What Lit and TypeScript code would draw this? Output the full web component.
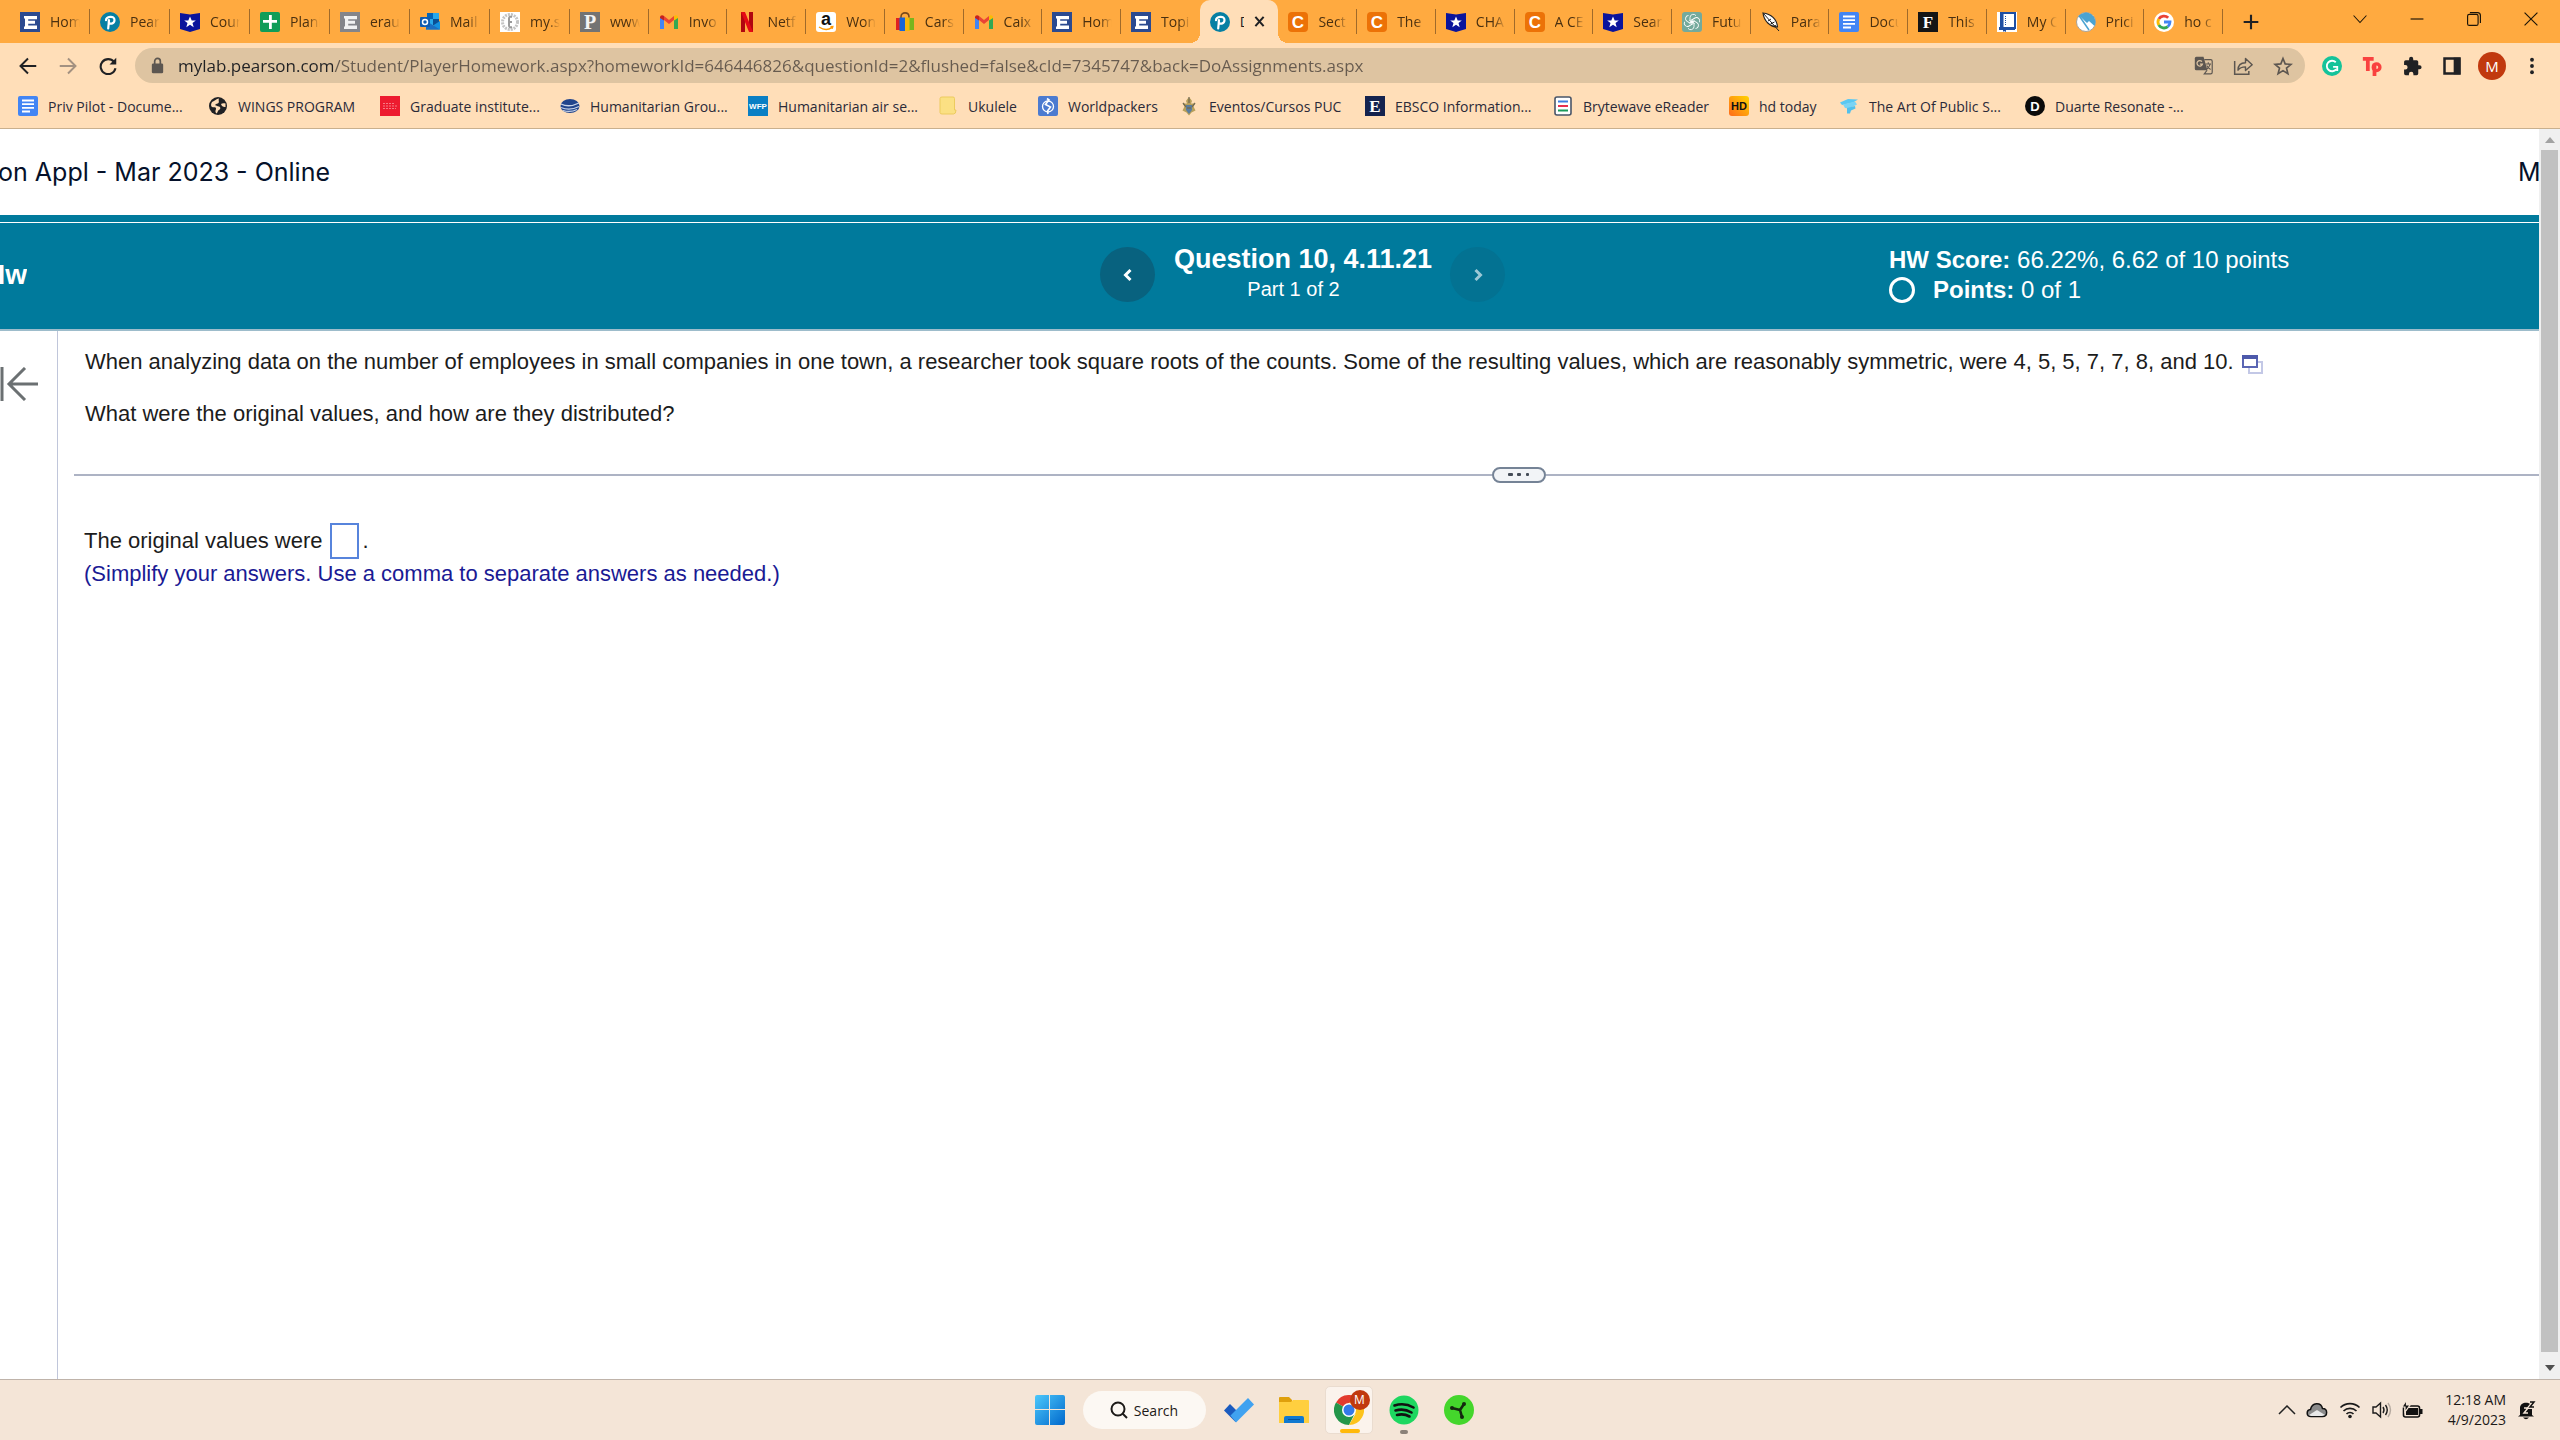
import { LitElement, html, css, svg, TemplateResult } from "lit";
import { customElement, property } from "lit/decorators.js";

const letter = (bg: string, fg: string, ch: string, radius = 0, size = 16, family = "Liberation Sans") => svg`
  <rect width="20" height="20" rx="${radius}" fill="${bg}"/>
  <text x="10" y="${10 + Math.round(size * 0.36)}" text-anchor="middle" font-family="${family}" font-weight="700" font-size="${size}" fill="${fg}">${ch}</text>`;

const blockE = (bg: string, fg: string) => svg`
  <rect width="20" height="20" fill="${bg}"/>
  <path d="M4 4h13v3.2H8.2v1.6H15v3H8.2v1.600H17V17H4v-2.600h1V6.600H4z" fill="${fg}"/>`;

const shield = svg`
  <path d="M0 1l10 1.500L20 1v16l-10 3L0 17z" fill="#0a149c"/>
  <path d="M10 4.500l1.700 4h4.100l-3.300 2.600 1.200 4.200-3.700-2.500-3.700 2.500 1.200-4.200-3.300-2.600h4.100z" fill="#fff"/>`;

const gmail = svg`
  <path d="M1 17V5l4 3v9z" fill="#4285f4"/>
  <path d="M15 17V8l4-3v12z" fill="#34a853"/>
  <path d="M5 8V4l5 4 5-4v4l-5 4z" fill="#ea4335"/>
  <path d="M1 5.500C1 3 3.500 2.500 5 4v4.500L1 6z" fill="#c5221f"/>
  <path d="M19 5.500C19 3 16.500 2.500 15 4v4.500L19 6z" fill="#fbbc04"/>`;

const docs = svg`
  <rect width="20" height="20" rx="2" fill="#4285f4"/>
  <path d="M4 4.500h12M4 8.200h12M4 11.900h12M4 15.500h8" stroke="#fff" stroke-width="1.800"/>`;

const icons: Record<string, unknown> = {
  erau: blockE("#2b4a90", "#fff"),
  erauGrey: blockE("#84858a", "#f2f2f2"),
  pearson: svg`<circle cx="10" cy="10" r="10" fill="#067fa3"/>
    <path d="M8.200 16.500l.8-8M6 8.200C6 4.500 14.500 3 14.500 8c0 3.600-4 4.500-5.500 2.800M8.900 8.200l-.2 2.600" fill="none" stroke="#fff" stroke-width="2.200" stroke-linecap="round"/>`,
  shield,
  sheets: svg`<rect width="20" height="20" rx="2" fill="#0f9d58"/><path d="M9 3h2.800v5H17v2.800h-5.200V17H9v-6.200H3V8h6z" fill="#fff"/>`,
  outlook: svg`<path d="M7 1h12v12H7z" fill="#28a8ea"/><path d="M7 1h6v6H7z" fill="#0364b8"/><path d="M13 7h6v6h-6z" fill="#0a4f94"/>
    <path d="M6 9l7 4.500L20 9v8.500H6z" fill="#1490df"/><path d="M6 9l14 8.500H6z" fill="#1b6ec2"/>
    <rect y="5" width="10" height="10" rx="1" fill="#0f5cb0"/><circle cx="5" cy="10" r="2.500" fill="none" stroke="#fff" stroke-width="1.500"/>`,
  mys: svg`<rect width="20" height="20" fill="#fff"/><circle cx="10" cy="10" r="7.500" fill="none" stroke="#c4c4c4" stroke-width="3" stroke-dasharray="2 1"/><path d="M12 5q-3-1-3 1.500v7q0 2.500 3 1.500M9 10h3" fill="none" stroke="#9a9a9a" stroke-width="2"/>`,
  parch: letter("#737373", "#f4f4f4", "P", 0, 20, "Liberation Serif"),
  gmail,
  netflix: svg`<path d="M4 0h4v20H4zM12 0h4v20h-4z" fill="#b1060f"/><path d="M4 0h4l8 20h-4z" fill="#e50914"/>`,
  amazon: svg`<rect width="20" height="20" rx="3" fill="#fff"/>
    <text x="10" y="13" text-anchor="middle" font-family="Liberation Sans" font-weight="700" font-size="18" fill="#111">a</text>
    <path d="M3 15c4.500 3 9.500 3 13 .4M14.500 14.700l2.300-.2-.6 2.200" fill="none" stroke="#f90" stroke-width="1.400"/>`,
  bag: svg`<path d="M6 7V5c0-5.500 8-5.500 8 0v2" fill="none" stroke="#7b4b1c" stroke-width="1.600"/>
    <path d="M1 6h4v12H1z" fill="#e02020"/><path d="M4.500 5.500H10V19H4.500z" fill="#1764d8"/><path d="M10 5.500h5V19h-5z" fill="#f6b60b"/><path d="M14.500 6H19v12h-4.500z" fill="#7ab51d"/>`,
  chegg: letter("#ec7207", "#fff", "C", 4, 17),
  openai: svg`<rect width="20" height="20" rx="3" fill="#74aa9c"/><g fill="none" stroke="#fff" stroke-width=".9"><g id="k"><path d="M8 9V5.500a3.300 3.300 0 0 1 6-1.800M8 9l4.500 2.500"/></g><path d="M8 9V5.500a3.300 3.300 0 0 1 6-1.800M8 9l4.500 2.500" transform="rotate(60 10 10)"/><path d="M8 9V5.500a3.300 3.300 0 0 1 6-1.800M8 9l4.500 2.500" transform="rotate(120 10 10)"/><path d="M8 9V5.500a3.300 3.300 0 0 1 6-1.800M8 9l4.500 2.500" transform="rotate(180 10 10)"/><path d="M8 9V5.500a3.300 3.300 0 0 1 6-1.800M8 9l4.500 2.500" transform="rotate(240 10 10)"/><path d="M8 9V5.500a3.300 3.300 0 0 1 6-1.800M8 9l4.500 2.500" transform="rotate(300 10 10)"/></g>`,
  quill: svg`<path d="M2 1c8 1 14 6 14.500 14C9 15 3 9 2 1z" fill="#fff" stroke="#222" stroke-width="1.200"/><path d="M2.500 1.500L18 19M7 9l3-2M9.500 12l4-2M12 14.500l3-1" stroke="#222" stroke-width="1" fill="none"/>`,
  docs,
  fblack: letter("#151515", "#fff", "F", 0, 17, "Liberation Serif"),
  book: svg`<rect width="20" height="20" fill="#fff"/><path d="M4 1h14v15H4z" fill="none" stroke="#1f4fa3" stroke-width="2"/><path d="M3 1h3.500v15H3zM2 15h16v3H9v2l-2-1-1 1v-2H2z" fill="#1f4fa3"/><path d="M8.500 4v9" stroke="#1f4fa3" stroke-dasharray="1 1"/>`,
  pricing: svg`<circle cx="10" cy="10" r="9.500" fill="#fff" stroke="#a7a39a"/><path d="M3 3.500A9.500 9.500 0 0 1 18.500 14L13 9l-2 2z" fill="#4ba3d1"/><path d="M3 3.500L13 18" stroke="#4ba3d1" stroke-width="1.500"/>`,
  google: svg`<circle cx="10" cy="10" r="10" fill="#fff"/><g fill="none" stroke-width="2.800"><path d="M14.200 5.800A6 6 0 0 0 4.800 7" stroke="#ea4335"/><path d="M4.800 7a6 6 0 0 0 0 6" stroke="#fbbc05"/><path d="M4.800 13a6 6 0 0 0 9 1.600" stroke="#34a853"/><path d="M13.800 14.600A6 6 0 0 0 16 10h-6" stroke="#4285f4"/></g>`,
  globe: svg`<circle cx="10" cy="10" r="9" fill="#202124"/><path d="M11 2.500c-3 .5-4 2-7 3.500-1.500 2.500-1 4 0 5 2 .5 4-.5 4 1.500s-1.500 2.500.5 5c1.500-1 1-3 2.500-3.500 2-1 1.500-3 0-3.500-2-.5-2.500-1-4-1.500 1-1.500 2.500-1 3.500-2 1-1.500-.5-3 .5-4.500zM13 8c1-1 3-1 4.500-.5V11c-2 .5-4-1-4.500-3z" fill="#ffdeb8"/>`,
  graduate: svg`<rect width="20" height="20" fill="#ed1b2f"/><path d="M3 7.500h12M3 10h14M3 12.500h13" stroke="#f67a85" stroke-width="1" stroke-dasharray="2 1"/>`,
  humanitarian: svg`<ellipse cx="10" cy="10" rx="9.500" ry="7" fill="#22458c"/><path d="M1 8c5 2.500 12 2 18-1M1 11.500c6 2.500 12 2 18-1M3 14.500c5 1.500 10 1 14-1" stroke="#c9d4e8" stroke-width="1.300" fill="none"/>`,
  wfp: letter("#0a7fc4", "#fff", "WFP", 0, 8),
  note: svg`<path d="M4 1h11q1.500 0 1.500 1.500V14H18q0 4-2.500 4H4q-2 0-2-1.500V2.500Q2 1 4 1z" fill="#fbe083" stroke="#eccb5e"/>`,
  worldpackers: svg`<rect width="20" height="20" rx="2" fill="#4c7bd0"/><circle cx="10" cy="10.500" r="5.500" fill="none" stroke="#fff" stroke-width="1.300"/><path d="M9 2.500l2 1.500-3.500 4.500 5 2.500-3 4 .5 3" fill="none" stroke="#fff" stroke-width="1.600"/>`,
  puc: svg`<path d="M7 5q3-6 6 0l-1 2.500h4l-1.500 3 2 4-4 2-2.500 3-2.500-3-4-2 2-4-1.500-3h4z" fill="#b79f5a"/><path d="M7 9h6v5l-3 4-3-4z" fill="#5a7d9e"/><path d="M4 7l3 4M16 7l-3 4M10 1v6M8 12h4" stroke="#746b52" stroke-width="1.300"/>`,
  ebsco: letter("#14234f", "#fff", "E", 0, 17, "Liberation Serif"),
  bryte: svg`<rect x="2" y="1" width="16" height="18" rx="2" fill="#fff" stroke="#4a5568" stroke-width="1.600"/><path d="M5 5.500h10" stroke="#3d7fe0" stroke-width="2"/><path d="M5 10h10" stroke="#e8304f" stroke-width="2"/><path d="M5 14.500h10" stroke="#1b9a5a" stroke-width="2"/>`,
  hd: svg`<defs><linearGradient id="hd" x1="0" y1="1" x2="1" y2="0"><stop offset="0" stop-color="#ff6a1a"/><stop offset="1" stop-color="#ffd400"/></linearGradient></defs><rect width="20" height="20" rx="3" fill="url(#hd)"/><text x="10" y="14" text-anchor="middle" font-family="Liberation Sans" font-weight="700" font-size="11" fill="#111">HD</text>`,
  art: svg`<path d="M1 6.500L9 3l10 .5-5 3L3 9z" fill="#5bc8f2"/><path d="M4 8.500l12-3 2 3-8 4-4-.5z" fill="#7ad4f5"/><path d="M8 12l8-2 .5 2.500-4.500 2-1 3H8z" fill="#52c0ec"/>`,
  duarte: svg`<circle cx="10" cy="10" r="10" fill="#0b0b0b"/><text x="10" y="15" text-anchor="middle" font-family="Liberation Sans" font-weight="700" font-size="13" fill="#fff">D</text>`,
};

@customElement("site-icon")
class SiteIcon extends LitElement {
  @property() name = "";
  static styles = css`
    :host { display: block; flex: none; width: 20px; height: 20px; }
    svg { display: block; width: 20px; height: 20px; }
  `;
  render() {
    return html`<svg viewBox="0 0 20 20" aria-hidden="true">${icons[this.name]}</svg>`;
  }
}

interface Tab { icon: string; label: string; active?: boolean }
const tabs: Tab[] = [
  { icon: "erau", label: "Hom" }, { icon: "pearson", label: "Pears" }, { icon: "shield", label: "Cour" },
  { icon: "sheets", label: "Plani" }, { icon: "erauGrey", label: "erau" }, { icon: "outlook", label: "Mail" },
  { icon: "mys", label: "my.s" }, { icon: "parch", label: "www" }, { icon: "gmail", label: "Invo" },
  { icon: "netflix", label: "Netf" }, { icon: "amazon", label: "Won" }, { icon: "bag", label: "Cars" },
  { icon: "gmail", label: "Caix" }, { icon: "erau", label: "Hom" }, { icon: "erau", label: "Topi" },
  { icon: "pearson", label: "D", active: true }, { icon: "chegg", label: "Sect" }, { icon: "chegg", label: "The" },
  { icon: "shield", label: "CHA" }, { icon: "chegg", label: "A CE" }, { icon: "shield", label: "Sear" },
  { icon: "openai", label: "Futu" }, { icon: "quill", label: "Para" }, { icon: "docs", label: "Docu" },
  { icon: "fblack", label: "This" }, { icon: "book", label: "My C" }, { icon: "pricing", label: "Prici" },
  { icon: "google", label: "ho c" },
];

const bookmarks: [string, string][] = [
  ["docs", "Priv Pilot - Docume..."], ["globe", "WINGS PROGRAM"], ["graduate", "Graduate institute..."],
  ["humanitarian", "Humanitarian Grou..."], ["wfp", "Humanitarian air se..."], ["note", "Ukulele"],
  ["worldpackers", "Worldpackers"], ["puc", "Eventos/Cursos PUC"], ["ebsco", "EBSCO Information..."],
  ["bryte", "Brytewave eReader"], ["hd", "hd today"], ["art", "The Art Of Public S..."], ["duarte", "Duarte Resonate -..."],
];

const icon = (size: number, body: unknown) =>
  html`<svg class="glyph" width="${size}" height="${size}" viewBox="0 0 24 24" fill="none" stroke="currentColor" stroke-width="2" aria-hidden="true">${body}</svg>`;

@customElement("browser-chrome")
class BrowserChrome extends LitElement {
  static styles = css`
    :host { display: block; font-family: "Open Sans", "Noto Sans", sans-serif; font-size: 14px; color: #2b2320; background: #ffdeb8; border-bottom: 1px solid #c9b08e; }
    * { box-sizing: border-box; }
    button { font: inherit; color: inherit; background: none; border: 0; padding: 0; margin: 0; display: flex; align-items: center; justify-content: center; }
    .glyph { display: block; flex: none; }
    .strip { display: flex; height: 43px; background: #ffaa40; padding-left: 10px; }
    .tabs { flex: 0 1 2213px; display: grid; grid-template-columns: repeat(7, 80px) repeat(21, minmax(0, 1fr)); }
    .tab { position: relative; justify-content: flex-start; padding-left: 10px; gap: 10px; color: #4a3010; min-width: 0; }
    .tab::after { content: ""; position: absolute; right: 0; top: 9px; width: 1px; height: 25px; background: #a06a2a; }
    .tab.quiet::after { display: none; }
    .label { width: 30px; overflow: hidden; white-space: nowrap; text-align: left; mask-image: linear-gradient(to right, #000 60%, transparent); }
    .tab.active { background: #ffdeb8; border-radius: 10px 10px 0 0; }
    .tab.active .label { width: 4px; mask-image: none; }
    .tab.active::before { content: ""; position: absolute; z-index: 1; left: -10px; right: -10px; bottom: 0; height: 10px; pointer-events: none;
      background: radial-gradient(circle at 0 0, transparent 10px, #ffdeb8 10px) left / 10px 10px no-repeat, radial-gradient(circle at 10px 0, transparent 10px, #ffdeb8 10px) right / 10px 10px no-repeat; }
    .tab.active { color: #202124; }
    .new { width: 56px; color: #202124; }
    .controls { margin-left: auto; display: flex; height: 38px; padding-right: 1px; color: #1c1508; }
    .controls button { width: 57px; }
    .bar { display: flex; align-items: center; height: 45px; padding: 0 8px; color: #202124; }
    .bar button { width: 40px; height: 40px; }
    .bar .off { color: #a39181; }
    .omni { flex: 1; display: flex; align-items: center; height: 35px; margin: 0 7px; border-radius: 18px; background: #dec4a1; padding: 0 2px 0 14px; gap: 12px; color: #5c5650; }
    .omni input { flex: 1; min-width: 0; border: 0; outline: 0; padding: 0; font: inherit; font-size: 17px; height: 30px; color: transparent;
      background: linear-gradient(to right, #202124 155px, #675b4f 155px); background-clip: text; -webkit-background-clip: text; }
    .actions { display: flex; }
    .avatar { width: 28px; height: 28px; border-radius: 50%; background: #c1390e; color: #fff; display: grid; place-items: center; font-size: 15px; }
    .marks { display: grid; grid-template-columns: 190px 172px 180px 188px 190px 100px 141px 186px 188px 176px 110px 186px auto; height: 40px; padding: 0 18px 4px; align-items: center; }
    .marks a { display: flex; align-items: center; gap: 10px; color: #2b2a38; text-decoration: none; white-space: nowrap; }
  `;
  render() {
    return html`
      <div class="strip">
        <div class="tabs" role="tablist">
          ${tabs.map((t, i) => html`
            <button role="tab" class="tab ${t.active ? "active quiet" : ""} ${tabs[i + 1]?.active ? "quiet" : ""}" aria-selected="${t.active ? "true" : "false"}">
              <site-icon name="${t.icon}"></site-icon><span class="label">${t.label}</span>
              ${t.active ? icon(11, svg`<path d="M3 2l18 20M21 2L3 22" stroke-width="4.500"/>`) : ""}
            </button>`)}
        </div>
        <button class="new" aria-label="New tab">${icon(16, svg`<path d="M12 1v22M1 12h22" stroke-width="3.200"/>`)}</button>
        <div class="controls">
          <button aria-label="Search tabs">${icon(14, svg`<path d="M1 6l11 12L23 6" stroke-width="1.800"/>`)}</button>
          <button aria-label="Minimize">${icon(14, svg`<path d="M1 12h22" stroke-width="2"/>`)}</button>
          <button aria-label="Restore">${icon(14, svg`<rect x="1" y="4" width="18" height="19" rx="3"/><path d="M5 1h13q5 0 5 5v13"/>`)}</button>
          <button aria-label="Close">${icon(14, svg`<path d="M1 1l22 22M23 1L1 23"/>`)}</button>
        </div>
      </div>
      <div class="bar">
        <button aria-label="Back">${icon(18, svg`<path d="M23 12H3M12 2L2 12l10 10" stroke-width="2.600"/>`)}</button>
        <button class="off" aria-label="Forward">${icon(18, svg`<path d="M1 12h20M12 2l10 10-10 10" stroke-width="2.600"/>`)}</button>
        <button aria-label="Reload">${icon(18, svg`<path d="M20 6.500A10 10 0 1 0 22 15" stroke-width="2.800"/><path d="M23 1v9h-9z" fill="currentColor" stroke="none"/>`)}</button>
        <div class="omni">
          ${icon(17, svg`<rect x="4" y="9" width="16" height="14" rx="2" fill="currentColor" stroke="none"/><path d="M8 10V6a4 4 0 0 1 8 0v4" stroke-width="2.400"/>`)}
          <input aria-label="Address" value="mylab.pearson.com/Student/PlayerHomework.aspx?homeworkId=646446826&questionId=2&flushed=false&cId=7345747&back=DoAssignments.aspx">
          <div class="actions">
            <button aria-label="Translate">${icon(19, svg`<path d="M3 1h9l5 17H3q-2 0-2-2V3q0-2 2-2z" fill="currentColor" stroke="none"/><path d="M13 4.500h8q2 0 2 2v14q0 2-2 2h-8l3.500-4.500" stroke-width="1.500"/><path d="M10 7a3.500 3.500 0 1 0 .7 3.200H7.500" stroke="#dec4a1" stroke-width="1.600"/><path d="M14.500 10h7M18 8v2M20.500 10c-1 4-3 5-4 6.500M16 12c1 2 3 4 5 5" stroke-width="1.300"/>`)}</button>
            <button aria-label="Share">${icon(20, svg`<path d="M2 6v16h17v-4" stroke-width="1.800"/><path d="M6 17c0-6 3-9 9-9V3l8 7.500-8 7V13c-4 0-7 1-9 4z" stroke-width="1.700" stroke-linejoin="round"/>`)}</button>
            <button aria-label="Bookmark">${icon(20, svg`<path d="M12 3l2.600 6.500 7 .5-5.400 4.500 1.700 6.800L12 17.600l-5.900 3.700 1.700-6.800L2.400 10l7-.5z"/>`)}</button>
          </div>
        </div>
        <button aria-label="Grammarly">${icon(20, svg`<circle cx="12" cy="12" r="12" fill="#15c39a" stroke="none"/><path d="M16.500 7.500A6.300 6.300 0 1 0 17 16M18.300 18v-5h-5" stroke="#fff" stroke-width="2.200"/>`)}</button>
        <button aria-label="Toucan">${icon(20, svg`<path d="M1 3.500h13M7 3v15M15 9v15" stroke="#f9423f" stroke-width="4.500"/><circle cx="17.500" cy="13.500" r="4" stroke="#f9423f" stroke-width="4"/>`)}</button>
        <button aria-label="Extensions">${icon(20, svg`<path d="M21 11h-1.500V7q0-2-2-2h-4V3.500a2.500 2.500 0 0 0-5 0V5h-4q-2 0-2 2v3.800H4a2.700 2.700 0 0 1 0 5.400H2.500V21q0 2 2 2h3.800v-1.500a2.700 2.700 0 0 1 5.400 0V23h3.800q2 0 2-2v-5H21a2.500 2.500 0 0 0 0-5z" fill="currentColor" stroke="none"/>`)}</button>
        <button aria-label="Side panel">${icon(20, svg`<path d="M3 3h18v18H3z" stroke-width="3"/><path d="M14 2h8v20h-8z" fill="currentColor" stroke="none"/>`)}</button>
        <button aria-label="Profile"><span class="avatar">M</span></button>
        <button aria-label="Menu">${icon(20, svg`<g fill="currentColor" stroke="none"><circle cx="12" cy="4.500" r="2.300"/><circle cx="12" cy="12" r="2.300"/><circle cx="12" cy="19.500" r="2.300"/></g>`)}</button>
      </div>
      <nav class="marks" aria-label="Bookmarks">
        ${bookmarks.map(([i, t]) => html`<a href="#"><site-icon name="${i}"></site-icon>${t}</a>`)}
      </nav>`;
  }
}

@customElement("homework-page")
class HomeworkPage extends LitElement {
  static styles = css`
    :host { display: flex; min-height: 0; background: #fff; color: #1c1c1c; font-family: "Liberation Sans", Arial, sans-serif; font-size: 22px; line-height: 32px; }
    * { box-sizing: border-box; }
    p, h1, h2 { margin: 0; font-weight: 400; }
    button { font: inherit; border: 0; padding: 0; display: grid; place-items: center; }
    svg { display: block; }
    .page { flex: 1; min-width: 0; display: flex; flex-direction: column; }
    .course { display: flex; justify-content: space-between; align-items: center; height: 86px; font: 25px/32px Inter, "Liberation Sans", sans-serif; color: #05112a; white-space: nowrap; overflow: hidden; }
    .course h1 { font: inherit; width: 330px; display: flex; justify-content: flex-end; }
    .user { width: 21px; overflow: hidden; }
    .head { border-top: 7px solid #007a9c; }
    .quiz { display: grid; grid-template-columns: minmax(0, 1fr) auto 650px; margin-top: 1px; height: 108px; background: #007a9c; color: #fff; border-bottom: 2px solid #9dbccb; }
    .hw { width: 27px; height: 104px; display: flex; justify-content: flex-end; align-items: center; overflow: hidden; font-size: 28px; font-weight: 700; }
    .step { display: flex; gap: 19px; padding-top: 24px; margin-right: 384px; }
    .step h2 { font-size: 27px; line-height: 24px; font-weight: 700; white-space: nowrap; }
    .titles { text-align: center; width: 257px; }
    .part { font-size: 20px; line-height: 36px; padding-right: 18px; }
    .round { width: 55px; height: 55px; border-radius: 50%; background: #08627f; color: #fff; }
    .round:disabled { background: #037292; color: #9cc8d6; }
    .score { padding-top: 22px; font-size: 24px; line-height: 30px; }
    .points { display: flex; align-items: center; gap: 18px; }
    .body { flex: 1; display: flex; }
    .rail { width: 58px; border-right: 1px solid #c0c6da; padding-top: 36px; }
    .rail button { background: none; color: #6b7072; }
    .content { flex: 1; min-width: 0; padding-left: 16px; }
    .prompt { padding: 15px 11px 0; display: grid; gap: 20px; }
    .line { display: flex; align-items: center; gap: 8px; white-space: nowrap; }
    .line svg { flex: none; margin-top: 4px; }
    .split { display: flex; align-items: center; height: 16px; margin-top: 37px; }
    .split i { height: 2px; background: #adb3c4; flex: 1; }
    .split i + button + i { flex: 0 1 993px; }
    .split button { width: 54px; height: 16px; border: 2px solid #758396; border-radius: 8px; background: #f2f4f7; }
    .answer { padding: 40px 11px 0 10px; }
    .answer label { display: flex; align-items: center; height: 36px; }
    .answer input { width: 29px; height: 36px; margin: 0 3px 0 8px; border: 2px solid #5784dc; padding: 2px; font: inherit; background: #fff; border-radius: 0; outline: 0; }
    .hint { color: #1a1a94; line-height: 30px; }
    .scroll { flex: none; width: 21px; background: #f0f0f0; display: flex; flex-direction: column; align-items: center; }
    .scroll span { height: 21px; display: grid; place-items: center; }
    .thumb { flex: 1; width: 17px; background: #c1c1c1; }
    .scroll .down { height: 27px; padding-top: 5px; }
  `;
  render() {
    return html`
      <main class="page">
        <header class="course"><h1>on Appl - Mar 2023 - Online</h1><span class="user">M</span></header>
        <div class="head">
          <div class="quiz">
            <div class="hw">Hw</div>
            <div class="step">
              <button class="round" aria-label="Previous question"><svg width="10" height="14" viewBox="0 0 12 16" fill="none" stroke="currentColor" stroke-width="3.600"><path d="M9 2L3 8l6 6"/></svg></button>
              <div class="titles"><h2>Question 10, 4.11.21</h2><p class="part">Part 1 of 2</p></div>
              <button class="round" disabled aria-label="Next question"><svg width="10" height="14" viewBox="0 0 12 16" fill="none" stroke="currentColor" stroke-width="3.600"><path d="M3 2l6 6-6 6"/></svg></button>
            </div>
            <div class="score">
              <div><b>HW Score:</b> 66.22%, 6.62 of 10 points</div>
              <div class="points"><svg width="26" height="26" viewBox="0 0 26 26"><circle cx="13" cy="13" r="11.500" fill="none" stroke="#fff" stroke-width="3"/></svg><span><b>Points:</b> 0 of 1</span></div>
            </div>
          </div>
        </div>
        <div class="body">
          <aside class="rail"><button aria-label="Collapse"><svg width="38" height="34" viewBox="0 0 38 34" fill="none" stroke="currentColor" stroke-width="3"><path d="M2 0v34M38 17H9M25 1L9 17l16 16"/></svg></button></aside>
          <section class="content">
            <div class="prompt">
              <p class="line">When analyzing data on the number of employees in small companies in one town, a researcher took square roots of the counts. Some of the resulting values, which are reasonably symmetric, were 4, 5, 5, 7, 7, 8, and 10.
                <svg width="21" height="19" viewBox="0 0 21 19"><rect x="7" y="7" width="13" height="11" fill="#fff" stroke="#c3c8e6" stroke-width="2"/><rect x="1" y="1" width="14" height="11" fill="#fff" stroke="#5a66b4" stroke-width="2"/><path d="M0 0h16v4H0z" fill="#4d59ab"/></svg></p>
              <p>What were the original values, and how are they distributed?</p>
            </div>
            <div class="split"><i></i><button aria-label="Resize panes"><svg width="22" height="4" viewBox="0 0 22 4" fill="#454c57"><rect width="5" height="3" rx="1"/><rect x="9" width="4" height="3" rx="1"/><rect x="18" width="3" height="3" rx="1"/></svg></button><i></i></div>
            <div class="answer">
              <label>The original values were<input type="text">.</label>
              <p class="hint">(Simplify your answers. Use a comma to separate answers as needed.)</p>
            </div>
          </section>
        </div>
      </main>
      <div class="scroll" aria-hidden="true">
        <span><svg width="10" height="6" viewBox="0 0 10 6"><path d="M0 6l5-6 5 6z" fill="#a3a3a3"/></svg></span>
        <div class="thumb"></div>
        <span class="down"><svg width="10" height="6" viewBox="0 0 10 6"><path d="M0 0l5 6 5-6z" fill="#505050"/></svg></span>
      </div>`;
  }
}

@customElement("task-bar")
class TaskBar extends LitElement {
  static styles = css`
    :host { display: grid; grid-template-columns: 1fr auto 1fr; align-items: center; height: 60px; background: #f4e5d7; border-top: 1px solid #bfb3aa; font-family: "Open Sans", "Noto Sans", sans-serif; font-size: 14px; color: #1c1a18; }
    * { box-sizing: border-box; }
    button { font: inherit; color: inherit; border: 0; padding: 0; background: none; display: grid; place-items: center; }
    svg { display: block; }
    .apps { grid-column: 2; display: flex; align-items: center; gap: 7px; padding-right: 52px; }
    .app { position: relative; width: 48px; height: 48px; }
    .find { width: 123px; height: 38px; margin: 0 2px; border-radius: 19px; background: #fcf8f3; display: flex; align-items: center; justify-content: center; gap: 6px; }
    .open { background: #fbf3ec; border: 1px solid #eadccf; border-radius: 5px; }
    .run { position: absolute; bottom: 0; left: 14px; width: 20px; height: 4px; border-radius: 2px; background: #ffb90a; }
    .idle { left: 20px; width: 8px; background: #8a8178; }
    .badge { position: absolute; right: 2px; top: 3px; width: 20px; height: 20px; border-radius: 50%; background: #c1390e; color: #fff; font-size: 12px; line-height: 20px; text-align: center; }
    .tray { display: flex; align-items: center; justify-content: flex-end; gap: 10px; padding-right: 24px; }
    .clock { display: block; text-align: right; line-height: 20px; margin: 0 2px 0 12px; }
  `;
  app(body: TemplateResult, label: string, extra: unknown = "", cls = "") {
    return html`<button class="app ${cls}" aria-label="${label}">${body}${extra}</button>`;
  }
  render() {
    return html`
      <div class="apps">
        ${this.app(html`<svg width="30" height="30" viewBox="0 0 30 30"><defs><linearGradient id="w" x1="0" y1="0" x2="1" y2="1"><stop offset="0" stop-color="#4cc8fb"/><stop offset="1" stop-color="#0068cc"/></linearGradient><clipPath id="c"><path d="M2 0h12v14H0V2q0-2 2-2zM15 0h13q2 0 2 2v12H15zM0 15h14v15H2q-2 0-2-2zM15 15h15v13q0 2-2 2H15z"/></clipPath></defs><rect width="30" height="30" fill="url(#w)" clip-path="url(#c)"/></svg>`, "Start")}
        <button class="find"><svg width="18" height="18" viewBox="0 0 18 18" fill="none" stroke="#1c1a18" stroke-width="2"><circle cx="8" cy="8" r="6.500"/><path d="M12.500 12.500L17 17"/></svg>Search</button>
        ${this.app(html`<svg width="30" height="26" viewBox="0 0 30 26"><path d="M0 13.500l6-6.500 11.500 11.500-6 6.500z" fill="#1a5bbf"/><path d="M6.500 18.500L24 1l6 6.500L12 25.500z" fill="#40a2f0"/></svg>`, "To Do")}
        ${this.app(html`<svg width="30" height="28" viewBox="0 0 30 28"><path d="M0 2q0-1 1-1h9l3 3v3H0z" fill="#dfa00c"/><path d="M0 6h12l2-2h15q1 0 1 1v22H0z" fill="#ffcf3f"/><path d="M5 27v-5q0-2 2-2h16q2 0 2 2v5z" fill="#1079d0"/><path d="M9 23.500h12" stroke="#06529a"/></svg>`, "File Explorer")}
        ${this.app(html`<svg width="30" height="30" viewBox="0 0 30 30"><path d="M15 15L2 7.500A15 15 0 0 1 28 7.500z" fill="#e33b2e"/><path d="M15 15L2 7.500A15 15 0 0 0 15 30l6-12z" fill="#23964a"/><path d="M15 15V7.500h13A15 15 0 0 1 15 30l6.500-11z" fill="#fcc31c"/><circle cx="15" cy="15" r="7" fill="#fff"/><circle cx="15" cy="15" r="5.500" fill="#3479e8"/></svg>`, "Chrome", html`<span class="badge">M</span><span class="run"></span>`, "open")}
        ${this.app(html`<svg width="30" height="30" viewBox="0 0 30 30"><circle cx="15" cy="15" r="14.500" fill="#1ed760"/><path d="M5.500 10.500c6-2 13-1.500 19 2M6.500 15.500c5-1.500 11-1 16 2M8 20c4-1 9-.5 12.500 1.500" fill="none" stroke="#111" stroke-width="2.600" stroke-linecap="round"/></svg>`, "Spotify", html`<span class="run idle"></span>`)}
        ${this.app(html`<svg width="30" height="30" viewBox="0 0 30 30"><circle cx="15" cy="15" r="15" fill="#44d62c"/><path d="M16 15L8 13M16 15l4-6M16 15l2 7" stroke="#14280f" stroke-width="2.600"/><g fill="#14280f"><circle cx="8" cy="13" r="2"/><circle cx="20" cy="9" r="2"/><circle cx="18" cy="22" r="2"/></g></svg>`, "Razer Cortex")}
      </div>
      <div class="tray">
        <button aria-label="Hidden icons"><svg width="18" height="10" viewBox="0 0 18 10" fill="none" stroke="#222" stroke-width="1.500"><path d="M1 9l8-8 8 8"/></svg></button>
        <button aria-label="OneDrive"><svg width="22" height="16" viewBox="0 0 22 16"><path d="M5 14.500C0 14.500 0 8 4.500 7.500 6 0 15 0 16.500 6.500c5.500 0 5.500 8 0 8z" fill="#8b8b8b" stroke="#111" stroke-width="1.500"/><path d="M3 13l8-5 8 5-3 1H5z" fill="#e8e8e8"/></svg></button>
        <button aria-label="Wi-Fi"><svg width="24" height="18" viewBox="-1 0 24 18" fill="none" stroke="#1a1a1a" stroke-width="1.700"><path d="M1.500 6.500a13.500 13.500 0 0 1 19 0M4.500 10a9.300 9.300 0 0 1 13 0M7.500 13a5 5 0 0 1 7 0"/><circle cx="11" cy="15.500" r="1.800" fill="#1a1a1a" stroke="none"/></svg></button>
        <button aria-label="Volume"><svg width="20" height="18" viewBox="0 0 20 18" fill="none" stroke="#1a1a1a" stroke-width="1.400"><path d="M1 6h3l4.500-4v14L4 12H1z"/><path d="M11 6q2 3 0 6M13.500 4q3.500 5 0 10"/><path d="M16 2q5 7 0 14" stroke="#b5aaa0"/></svg></button>
        <button aria-label="Battery"><svg width="21" height="18" viewBox="0 0 21 18"><rect x="1.500" y="5" width="16" height="11" rx="2" fill="none" stroke="#111" stroke-width="1.600"/><path d="M6 7h10v7H4v-4z" fill="#111"/><path d="M18 8h2.500v5H18z" fill="#111"/><path d="M4.500-1L0 6h3v5l5-7H4.500z" fill="#111" stroke="#f4e5d7" stroke-width="1.200"/></svg></button>
        <button class="clock">12:18 AM<br>4/9/2023</button>
        <button aria-label="Notifications"><svg width="18" height="20" viewBox="0 0 18 20"><path d="M2 15V8c0-7 12-7 12 0v7l2 1.500H0zM5 17.500h6q-3 3.500-6 0z" fill="#111"/><path d="M12 2h4l-4 5h4" fill="none" stroke="#f4e5d7" stroke-width="4"/><path d="M6 8h4l-4 5h4" fill="none" stroke="#f4e5d7" stroke-width="1.500"/><path d="M12 2h4l-4 5h4" fill="none" stroke="#111" stroke-width="1.500"/></svg></button>
      </div>`;
  }
}

@customElement("app-root")
class AppRoot extends LitElement {
  static styles = css`
    :host { display: flex; flex-direction: column; min-height: 100vh; overflow: hidden; }
    .fill { flex: 1; }
  `;
  render() {
    return html`<browser-chrome></browser-chrome><homework-page class="fill"></homework-page><task-bar></task-bar>`;
  }
}
